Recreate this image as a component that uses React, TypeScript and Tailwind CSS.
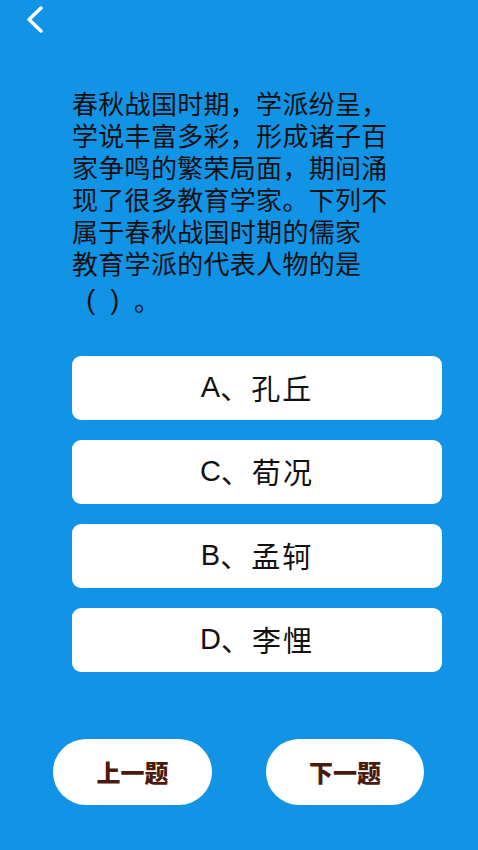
import React from "react";

const lines = [
  "春秋战国时期，学派纷呈，",
  "学说丰富多彩，形成诸子百",
  "家争鸣的繁荣局面，期间涌",
  "现了很多教育学家。下列不",
  "属于春秋战国时期的儒家",
  "教育学派的代表人物的是",
];

const options = [
  ["A", "孔丘"],
  ["C", "荀况"],
  ["B", "孟轲"],
  ["D", "李悝"],
];

const cjk = '"Noto Sans CJK SC", "Noto Sans", sans-serif';
const latin = '"Liberation Sans", "Noto Sans CJK SC", sans-serif';

export default function App() {
  return (
    <div
      className="w-[478px] h-[850px] bg-[#1193e6] flex flex-col overflow-hidden"
      style={{ fontFamily: cjk }}
    >
      <div className="h-[40px] pl-[24px] pt-[4px]">
        <svg width="24" height="32" viewBox="0 0 24 32" fill="none">
          <path
            d="M17 4 L5 15.5 L17 27"
            stroke="white"
            strokeWidth="3.5"
            strokeLinecap="round"
            strokeLinejoin="round"
          />
        </svg>
      </div>
      <div className="pl-[72px] pt-[47px] text-[26px] leading-[32px] tracking-[0.3px] text-[#111111]">
        <p className="whitespace-pre-line">{lines.join("\n")}</p>
        <div className="mt-[5px] h-[32px] flex items-center pl-[3px]">
          <span
            className="w-[32px] text-center text-[27px] font-light"
            style={{ fontFamily: latin }}
          >
            (
          </span>
          <span
            className="w-[16px] text-center text-[27px] font-light"
            style={{ fontFamily: latin }}
          >
            )
          </span>
          <span className="ml-[11px]">。</span>
        </div>
      </div>
      <div className="mt-[40px] pl-[72px] pr-[36px] flex flex-col gap-[20px]">
        {options.map(([l, n]) => (
          <div
            key={l}
            className="h-[64px] bg-white rounded-[9px] flex items-center justify-center text-[29px] text-[#111111]"
          >
            <span style={{ fontFamily: latin }}>{l}</span>
            <span className="tracking-[2px]">、{n}</span>
          </div>
        ))}
      </div>
      <div className="mt-[67px] flex pl-[53px] gap-[54px]">
        <div className="w-[159px] h-[66px] bg-white rounded-full flex items-center justify-center text-[24px] font-black text-[#4a1a0c]">
          上一题
        </div>
        <div className="w-[158px] h-[66px] bg-white rounded-full flex items-center justify-center text-[24px] font-black text-[#4a1a0c]">
          下一题
        </div>
      </div>
    </div>
  );
}
